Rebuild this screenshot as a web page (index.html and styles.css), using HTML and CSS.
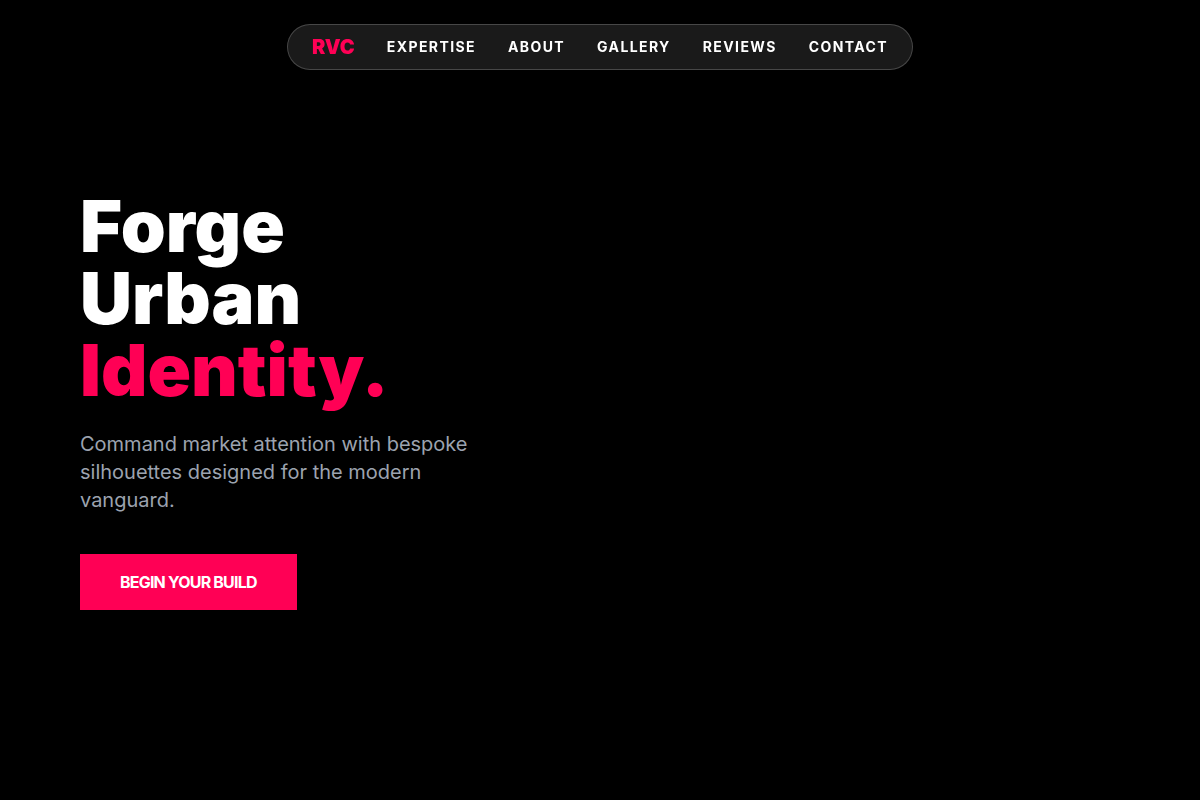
FILE: index.html
```html
<!DOCTYPE html>
<html lang="en">
<head>
    <meta charset="UTF-8">
    <meta name="viewport" content="width=device-width, initial-scale=1.0">
    <title>RVC | Forge Urban Identity</title>
    <link rel="stylesheet" href="styles.css">
</head>
<body>
    <header class="site-header">
        <nav class="navbar">
            <a href="#home" class="logo">RVC</a>
            <a href="#expertise" class="nav-link">Expertise</a>
            <a href="#about" class="nav-link">About</a>
            <a href="#gallery" class="nav-link">Gallery</a>
            <a href="#reviews" class="nav-link">Reviews</a>
            <a href="#contact" class="nav-link">Contact</a>
        </nav>
    </header>

    <main class="hero" id="home">
        <div class="hero-content">
            <h1>Forge<br>Urban<br><span class="accent">Identity.</span></h1>
            <p>Command market attention with bespoke silhouettes designed for the modern vanguard.</p>
            <button type="button" class="cta">Begin Your Build</button>
        </div>
    </main>
</body>
</html>
```
FILE: styles.css
```css
* {
    box-sizing: border-box;
}
body {
    margin: 0;
    min-height: 100vh;
    background-color: #000;
    color: #fff;
    font-family: Inter, sans-serif;
}
.site-header {
    position: fixed;
    top: 24px;
    left: 0;
    right: 0;
    display: flex;
    justify-content: center;
}
.navbar {
    display: flex;
    align-items: center;
    gap: 32px;
    padding: 8px 24px;
    background: rgba(255, 255, 255, 0.1);
    border: 1px solid rgba(255, 255, 255, 0.2);
    border-radius: 9999px;
}
.navbar a {
    text-decoration: none;
}
.logo {
    color: #ff0055;
    font-size: 20px;
    line-height: 28px;
    font-weight: 900;
}
.nav-link {
    color: #fff;
    font-size: 14px;
    line-height: 20px;
    font-weight: 700;
    letter-spacing: 0.1em;
    text-transform: uppercase;
}
.hero {
    display: flex;
    align-items: center;
    min-height: 100vh;
    padding: 0 80px;
}
.hero-content {
    max-width: 448px;
}
.hero h1 {
    margin: 0 0 24px;
    font-size: 72px;
    line-height: 72px;
    font-weight: 900;
}
.accent {
    color: #ff0055;
}
.hero p {
    max-width: 400px;
    margin: 0 0 40px;
    color: #9ca3af;
    font-size: 20px;
    line-height: 28px;
}
.cta {
    padding: 16px 40px;
    background-color: #ff0055;
    color: #fff;
    border: none;
    font-family: inherit;
    font-size: 16px;
    line-height: 24px;
    font-weight: 700;
    letter-spacing: -0.05em;
    text-transform: uppercase;
    cursor: pointer;
}
.cta:hover {
    background-color: #d60047;
}
```
